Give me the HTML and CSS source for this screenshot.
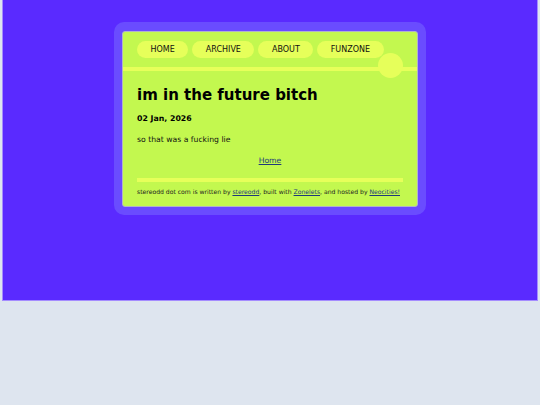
FILE: index.html
```html
<!DOCTYPE html>
<html>
<head>
<meta charset="utf-8">
<link rel="stylesheet" href="styles.css">
</head>
<body>
<div class="page">
  <div class="frame">
    <div class="inner">
      <nav class="nav">
        <a class="pill" href="#">HOME</a>
        <a class="pill" href="#">ARCHIVE</a>
        <a class="pill" href="#">ABOUT</a>
        <a class="pill" href="#">FUNZONE</a>
      </nav>
      <div class="rule"></div>
      <div class="dot"></div>
      <main class="content">
        <h1 class="title">im in the future bitch</h1>
        <p class="date">02 Jan, 2026</p>
        <p class="text">so that was a fucking lie</p>
        <p class="back"><a href="#">Home</a></p>
        <div class="bar"></div>
        <footer class="footer">stereodd dot com is written by <a href="#">stereodd</a>, built with <a href="#">Zonelets</a>, and hosted by <a href="#">Neocities!</a></footer>
      </main>
    </div>
  </div>
</div>
</body>
</html>
```
FILE: styles.css
```css
html, body {
  margin: 0;
  padding: 0;
  background: #dee5ef;
  font-family: "DejaVu Sans", Verdana, sans-serif;
}
.page {
  margin: 0 2px;
  height: 301px;
  background: #5a2aff;
  border: 1px solid #a58cff;
  border-top: none;
  padding-top: 22px;
  box-sizing: border-box;
}
.frame {
  width: 312px;
  margin: 0 auto;
  box-sizing: border-box;
  padding: 9px 8px 8px;
  background: #6a4cff;
  border-radius: 10px;
}
.inner {
  position: relative;
  background: #c3f84f;
  border: 1px solid #b0b4c8;
  border-radius: 3px;
  height: 176px;
  box-sizing: border-box;
}
.nav {
  display: flex;
  gap: 4px;
  padding: 9px 14px 0;
}
.pill {
  display: flex;
  align-items: center;
  height: 17px;
  padding: 0 13.5px;
  border-radius: 9px;
  background: #e6ff5a;
  color: #111;
  text-decoration: none;
  font-size: 8px;
}
.rule {
  margin-top: 9px;
  height: 4px;
  background: #e6ff5a;
}
.dot {
  position: absolute;
  left: 255px;
  top: 20.5px;
  width: 25px;
  height: 25px;
  border-radius: 50%;
  background: #e6ff5a;
}
.content {
  padding: 0 14px;
}
.title {
  margin: 14px 0 0;
  font-size: 15px;
  line-height: 20px;
  color: #000;
}
.date {
  margin: 9px 0 0;
  font-size: 7.8px;
  font-weight: bold;
  line-height: 10px;
  color: #000;
}
.text {
  margin: 11px 0 0;
  font-size: 7.7px;
  line-height: 10px;
  color: #111;
}
.back {
  margin: 11px 0 0;
  text-align: center;
  font-size: 7.7px;
  line-height: 10px;
}
a {
  color: #1f3a7a;
}
.bar {
  margin-top: 12px;
  height: 4px;
  background: #e6ff5a;
}
.footer {
  margin-top: 6px;
  font-size: 6.1px;
  line-height: 8px;
  color: #222;
}
```
